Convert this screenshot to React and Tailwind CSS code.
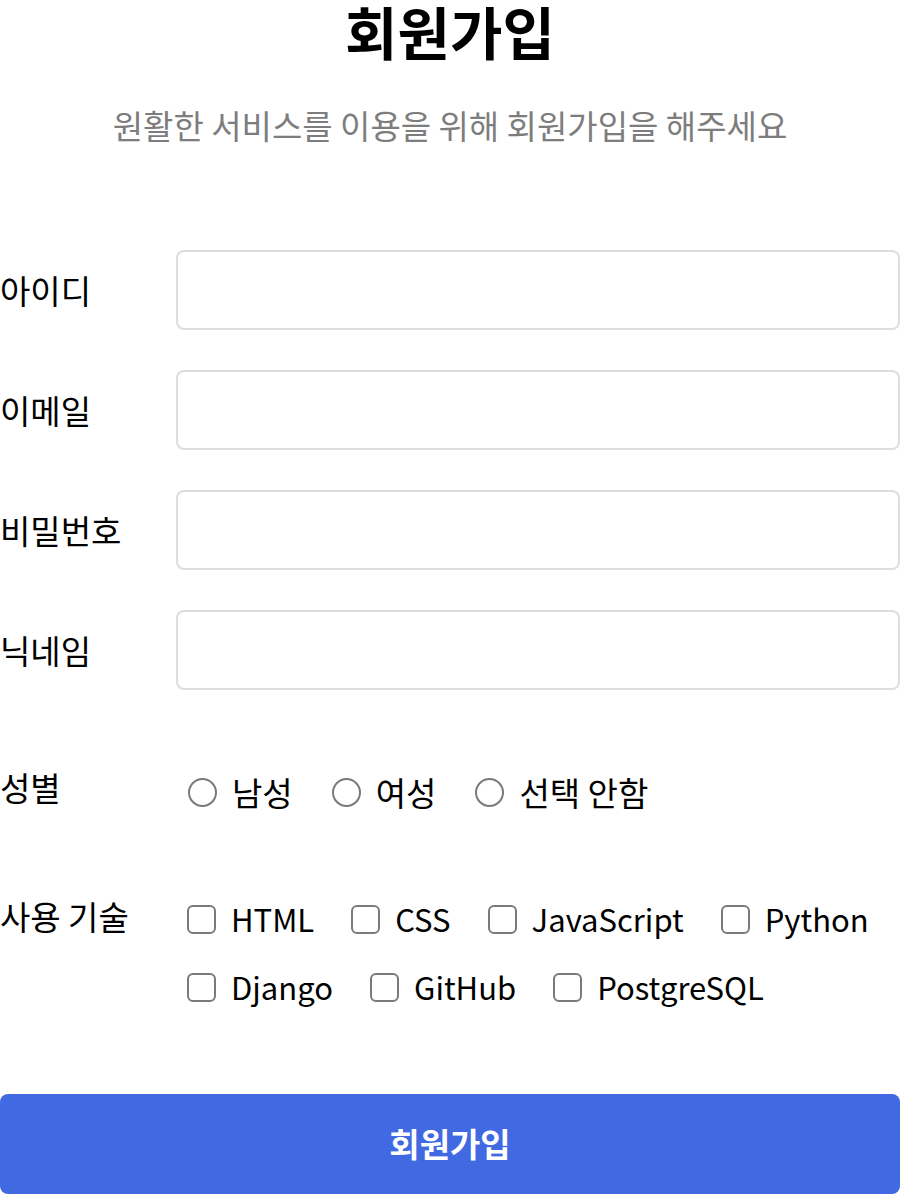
import React from "react";

const font = { fontFamily: '"Noto Sans CJK KR", "Noto Sans", sans-serif' };

function Field({ label }) {
  return (
    <div className="flex items-center">
      <label className="w-[176px] shrink-0 text-[33px] leading-[40px] text-black">{label}</label>
      <input
        type="text"
        className="h-[80px] flex-1 rounded-[8px] border-2 border-[#dedede] bg-white outline-none"
      />
    </div>
  );
}

function Radio({ label }) {
  return (
    <label className="flex items-center gap-[15px]">
      <span className="block h-[29px] w-[29px] rounded-full border-2 border-[#7a7a7a] bg-white" />
      <span className="text-[33px] leading-[40px] text-black">{label}</span>
    </label>
  );
}

function Check({ label }) {
  return (
    <label className="flex items-center gap-[15px]">
      <span className="block h-[29px] w-[29px] rounded-[6px] border-2 border-[#7a7a7a] bg-white" />
      <span className="text-[31px] leading-[40px] text-black">{label}</span>
    </label>
  );
}

export default function App() {
  return (
    <div className="w-[900px] bg-white" style={font}>
      <h1 className="text-center text-[57px] font-bold leading-[60px] text-black">회원가입</h1>
      <p className="mt-[45px] text-center text-[33px] leading-[40px] text-[#7d7d7d]">
        원활한 서비스를 이용을 위해 회원가입을 해주세요
      </p>
      <form className="mt-[105px] flex flex-col">
        <div className="flex flex-col gap-[40px]">
          <Field label="아이디" />
          <Field label="이메일" />
          <Field label="비밀번호" />
          <Field label="닉네임" />
        </div>
        <div className="mt-[77px] flex items-start">
          <div className="w-[176px] shrink-0 text-[33px] leading-[40px] text-black">성별</div>
          <div className="mt-[5px] flex items-center gap-[39px] pl-[12px]">
            <Radio label="남성" />
            <Radio label="여성" />
            <Radio label="선택 안함" />
          </div>
        </div>
        <div className="mt-[84px] flex items-start">
          <div className="w-[176px] shrink-0 text-[33px] leading-[40px] text-black">사용 기술</div>
          <div className="mt-[3px] flex flex-col gap-[28px] pl-[11px]">
            <div className="flex items-center gap-[37px]">
              <Check label="HTML" />
              <Check label="CSS" />
              <Check label="JavaScript" />
              <Check label="Python" />
            </div>
            <div className="flex items-center gap-[37px]">
              <Check label="Django" />
              <Check label="GitHub" />
              <Check label="PostgreSQL" />
            </div>
          </div>
        </div>
        <button
          type="button"
          className="mt-[87px] h-[100px] w-full rounded-[8px] bg-[#4169e1] text-[33px] font-bold text-white"
        >
          회원가입
        </button>
      </form>
    </div>
  );
}
